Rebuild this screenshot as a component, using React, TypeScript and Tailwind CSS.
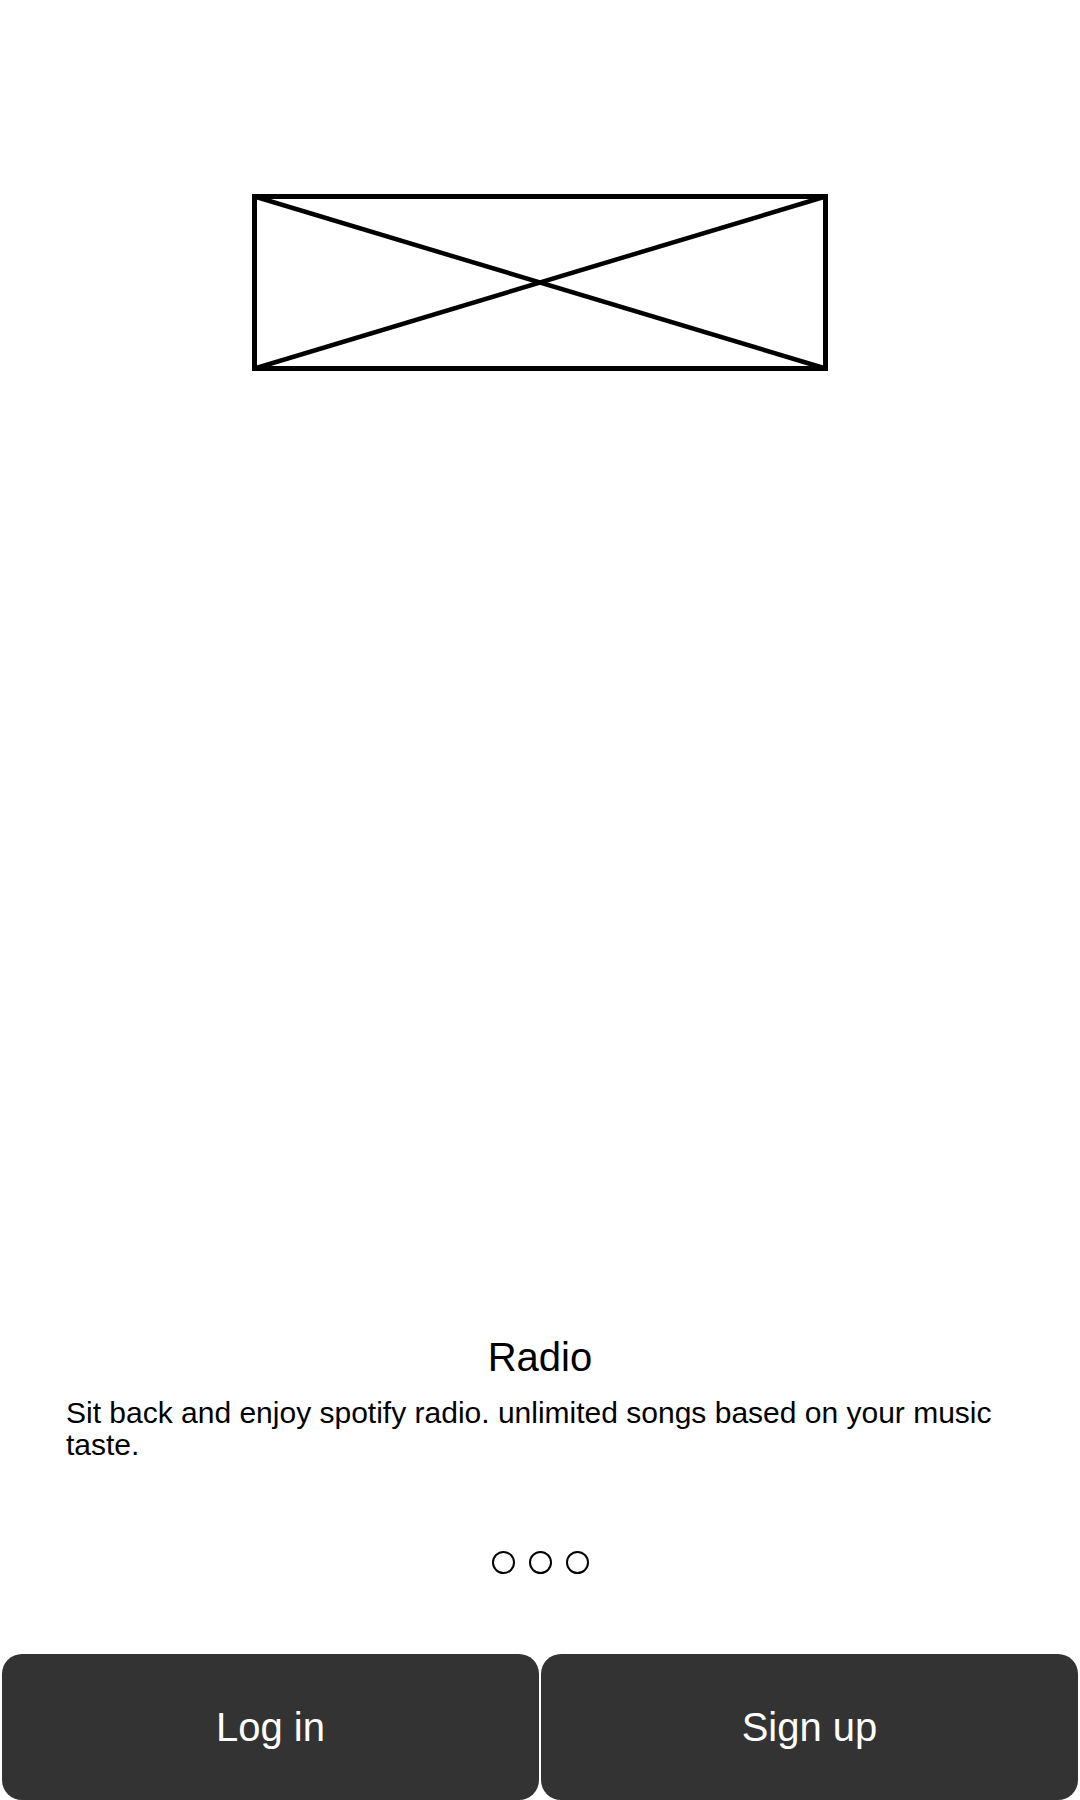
const PlaceholderImage = () => (
  <svg width="576" height="177" viewBox="0 0 576 177" className="block">
    <rect x="2.5" y="2.5" width="571" height="172" fill="none" stroke="#000" strokeWidth="5" />
    <line x1="2.5" y1="2.5" x2="573.5" y2="174.5" stroke="#000" strokeWidth="4.5" />
    <line x1="2.5" y1="174.5" x2="573.5" y2="2.5" stroke="#000" strokeWidth="4.5" />
  </svg>
);

export default function App() {
  return (
    <div
      className="h-[1800px] w-[1080px] flex flex-col bg-white text-black"
      style={{ fontFamily: '"Liberation Sans", Arial, sans-serif' }}
    >
      {/* logo placeholder */}
      <div className="mt-[194px] self-center">
        <PlaceholderImage />
      </div>

      <div className="flex-1" />

      {/* onboarding slide */}
      <h2 className="text-center text-[40px] leading-[46px]">Radio</h2>
      <p className="mt-[17px] px-[66px] text-[30px] leading-[32px]">
        Sit back and enjoy spotify radio. unlimited songs based on your music taste.
      </p>

      {/* pager dots */}
      <div className="mt-[90px] flex justify-center gap-[14px]">
        <span className="w-[23px] h-[23px] rounded-full border-2 border-black" />
        <span className="w-[23px] h-[23px] rounded-full border-2 border-black" />
        <span className="w-[23px] h-[23px] rounded-full border-2 border-black" />
      </div>

      {/* actions */}
      <div className="mt-[80px] flex gap-[2px] px-[2px]">
        <button className="flex-1 h-[146px] rounded-[20px] bg-[#333333] text-white text-[40px]">
          Log in
        </button>
        <button className="flex-1 h-[146px] rounded-[20px] bg-[#333333] text-white text-[40px]">
          Sign up
        </button>
      </div>
    </div>
  );
}
